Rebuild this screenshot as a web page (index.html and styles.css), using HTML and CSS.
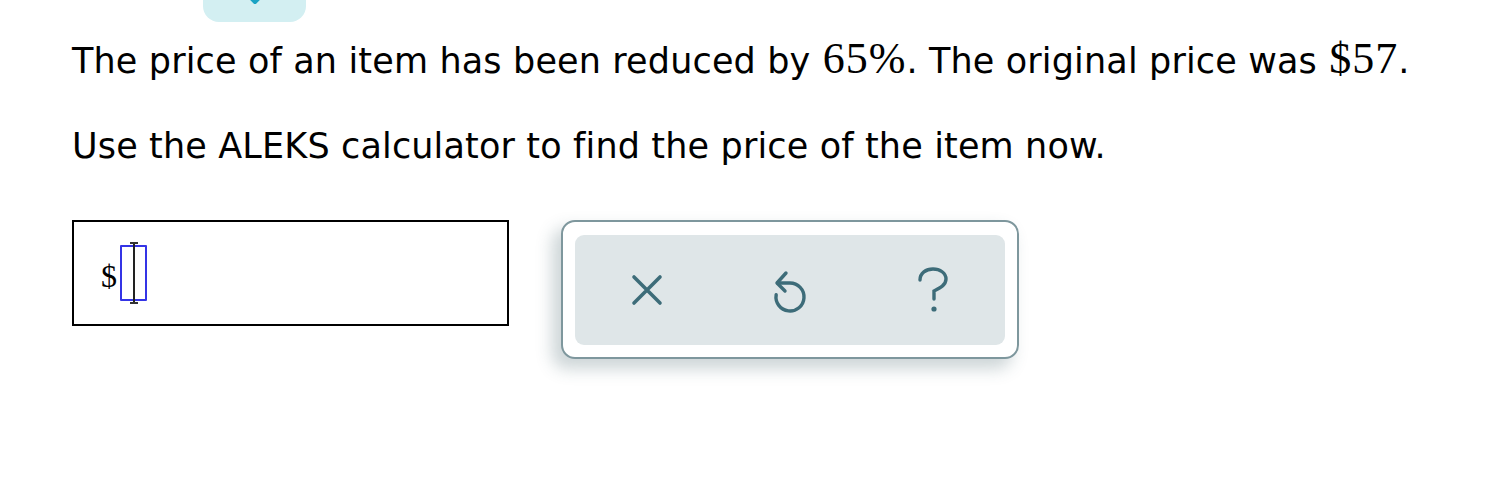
FILE: index.html
```html
<!DOCTYPE html>
<html>
<head>
<meta charset="utf-8">
<link rel="stylesheet" href="styles.css">
</head>
<body>
<div class="page">
  <div class="top-tab-row">
    <div class="top-tab">
      <svg class="chev" width="20" height="10" viewBox="0 0 20 10"><path d="M4 -4 L10 2 L16 -4" fill="none" stroke="#1aa3c4" stroke-width="4" stroke-linecap="round" stroke-linejoin="round"/></svg>
    </div>
  </div>
  <p class="line line1">The price of an item has been reduced by <span class="math">65%</span>. The original price was <span class="math">$57</span>.</p>
  <p class="line line2">Use the ALEKS calculator to find the price of the item now.</p>
  <div class="answer-row">
    <div class="answer-box">
      <span class="dollar">$</span>
      <span class="slot"><span class="cursor"></span></span>
    </div>
    <div class="toolbar">
      <div class="toolbar-inner">
        <button class="tool" aria-label="clear">
          <svg width="32" height="32" viewBox="0 0 32 32"><path d="M3 3 L29 29 M29 3 L3 29" fill="none" stroke="#3d6c79" stroke-width="3.6" stroke-linecap="round"/></svg>
        </button>
        <button class="tool" aria-label="undo">
          <svg width="60" height="60" viewBox="0 0 60 60"><path d="M26 13 L17 23 L25 31" fill="none" stroke="#3d6c79" stroke-width="3.4" stroke-linecap="round" stroke-linejoin="round"/><path d="M17.5 23 L30 23 A14 14 0 1 1 16.2 34.6" fill="none" stroke="#3d6c79" stroke-width="3.4" stroke-linecap="round"/></svg>
        </button>
        <button class="tool" aria-label="help">
          <svg width="30" height="46" viewBox="0 0 30 46"><path d="M2 13 C 2 6, 8 2, 15 2 C 22 2, 28 6, 28 12 C 28 18, 22 21, 16 24 L16 32" fill="none" stroke="#3d6c79" stroke-width="3.4" stroke-linecap="round"/><circle cx="16" cy="42" r="2.6" fill="#3d6c79"/></svg>
        </button>
      </div>
    </div>
  </div>
</div>
</body>
</html>
```
FILE: styles.css
```css
html, body {
  margin: 0;
  padding: 0;
  background: #ffffff;
}
.page {
  padding-left: 72px;
  font-family: "DejaVu Sans", Verdana, sans-serif;
  color: #000;
}
.top-tab-row {
  height: 22px;
  padding-left: 131px;
}
.top-tab {
  width: 103px;
  height: 22px;
  background: #d3eff2;
  border-radius: 0 0 16px 16px;
  display: flex;
  justify-content: center;
}
.chev { display: block; }
.line {
  margin: 0;
  font-size: 35px;
  line-height: 46px;
  letter-spacing: 0.15px;
  white-space: nowrap;
}
.line1 {
  margin-top: 16px;
}
.line2 {
  margin-top: 39px;
}
.math {
  font-family: "Liberation Serif", "Times New Roman", serif;
  font-size: 44px;
  line-height: 40px;
  letter-spacing: 1px;
  margin-left: 1px;
}
.answer-row {
  margin-top: 51px;
  display: flex;
  align-items: flex-start;
  gap: 52px;
  padding-bottom: 30px;
}
.answer-box {
  box-sizing: border-box;
  width: 437px;
  height: 106px;
  border: 2px solid #000;
  display: flex;
  align-items: center;
  padding-left: 27px;
}
.dollar {
  font-family: "Liberation Serif", "Times New Roman", serif;
  font-size: 32px;
  line-height: 32px;
  margin-top: 6px;
  margin-right: 3px;
}
.slot {
  position: relative;
  box-sizing: border-box;
  width: 27px;
  height: 56px;
  border: 2px solid #3434e6;
  border-radius: 1px;
  display: flex;
  justify-content: center;
}
.cursor {
  width: 2px;
  height: 60px;
  margin-top: -4px;
  background: #222;
}
.cursor::before, .cursor::after {
  content: "";
  position: absolute;
  left: 50%;
  width: 8px;
  height: 2px;
  margin-left: -4px;
  background: #333;
}
.cursor::before { top: -5px; }
.cursor::after { bottom: -5px; }
.toolbar {
  box-sizing: border-box;
  width: 458px;
  height: 139px;
  border: 2px solid #7e979d;
  border-radius: 14px;
  background: #fff;
  padding: 13px 12px;
  box-shadow: -8px 9px 16px 1px rgba(60, 90, 100, 0.25);
}
.toolbar-inner {
  height: 110px;
  background: #dfe6e8;
  border-radius: 9px;
  display: grid;
  grid-template-columns: 143px 143px 143px;
  align-items: center;
}
.tool {
  border: 0;
  background: transparent;
  padding: 0;
  height: 60px;
  display: flex;
  align-items: center;
  justify-content: center;
  cursor: pointer;
}
.tool svg { display: block; }
```
